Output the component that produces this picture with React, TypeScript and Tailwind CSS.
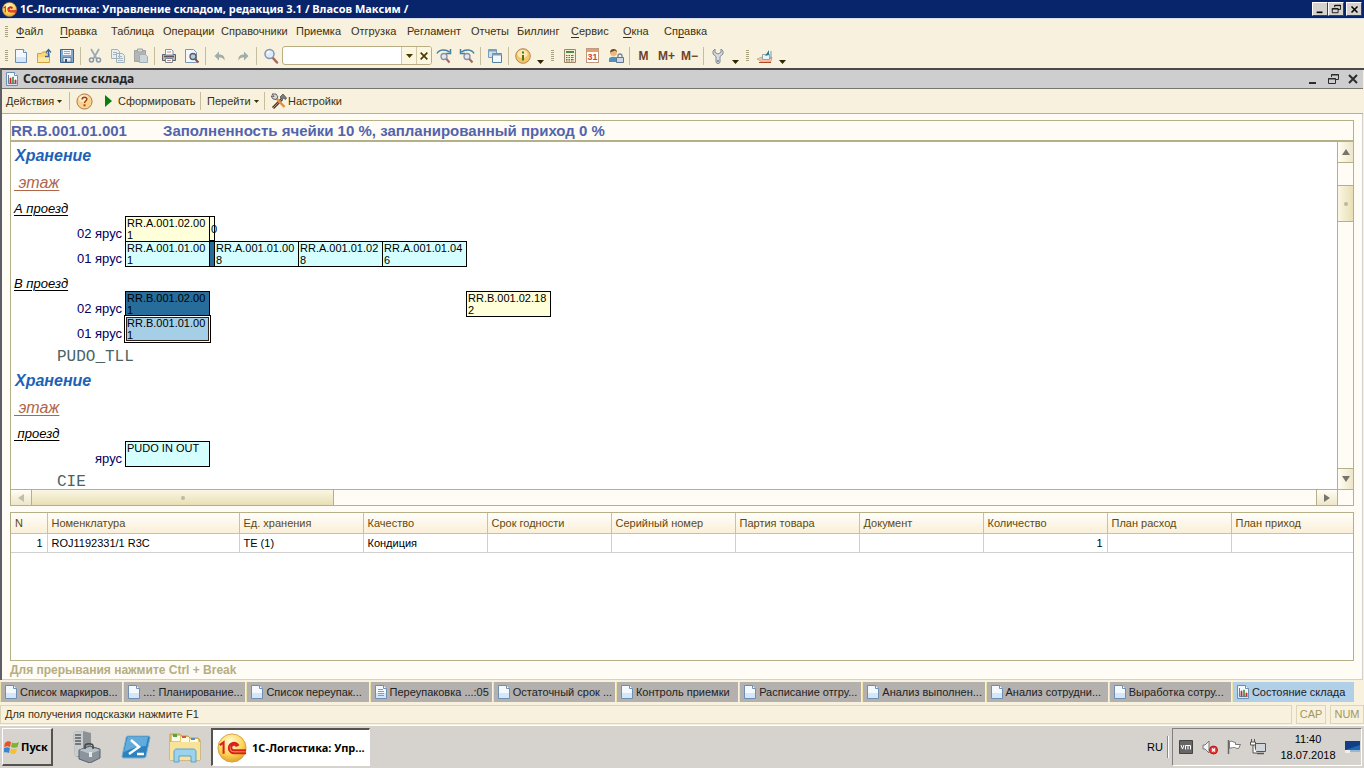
import type { ReactNode } from "react";
import clsx from "clsx";

const menuItems = [
  { before: "", key: "Ф", after: "айл", width: "w-[44px]" },
  { before: "", key: "П", after: "равка", width: "w-[51px]" },
  { before: "Таблица", key: "", after: "", width: "w-[52px]" },
  { before: "Операции", key: "", after: "", width: "w-[58px]" },
  { before: "Справочники", key: "", after: "", width: "w-[75px]" },
  { before: "Приемка", key: "", after: "", width: "w-[55px]" },
  { before: "Отгрузка", key: "", after: "", width: "w-[56px]" },
  { before: "Регламент", key: "", after: "", width: "w-[64px]" },
  { before: "Отчеты", key: "", after: "", width: "w-[46px]" },
  { before: "Биллинг", key: "", after: "", width: "w-[54px]" },
  { before: "", key: "С", after: "ервис", width: "w-[52px]" },
  { before: "", key: "О", after: "кна", width: "w-[41px]" },
  { before: "Сп", key: "р", after: "авка", width: "w-[52px]" },
];

const columns = [
  { title: "N", width: "w-9" },
  { title: "Номенклатура", width: "w-[192px]" },
  { title: "Ед. хранения", width: "w-[124px]" },
  { title: "Качество", width: "w-[124px]" },
  { title: "Срок годности", width: "w-[124px]" },
  { title: "Серийный номер", width: "w-[124px]" },
  { title: "Партия товара", width: "w-[124px]" },
  { title: "Документ", width: "w-[124px]" },
  { title: "Количество", width: "w-[124px]" },
  { title: "План расход", width: "w-[124px]" },
  { title: "План приход", width: "" },
];

const rows = [["1", "ROJ1192331/1 R3C", "ТЕ (1)", "Кондиция", "", "", "", "", "1", "", ""]];

const windows = [
  { title: "Список маркиров...", icon: "page" },
  { title: "...: Планирование...", icon: "page" },
  { title: "Список переупак...", icon: "page" },
  { title: "Переупаковка ...:05", icon: "lines" },
  { title: "Остаточный срок ...", icon: "page" },
  { title: "Контроль приемки", icon: "page" },
  { title: "Расписание отгру...", icon: "page" },
  { title: "Анализ выполнен...", icon: "page" },
  { title: "Анализ сотрудни...", icon: "page" },
  { title: "Выработка сотру...", icon: "page" },
  { title: "Состояние склада", icon: "chart", active: true },
];

function Icon({ children, className = "size-4" }: { children: ReactNode; className?: string }) {
  return (
    <svg viewBox="0 0 16 16" fill="none" className={clsx("shrink-0", className)} aria-hidden="true">
      {children}
    </svg>
  );
}

function PageIcon({ kind }: { kind: string }) {
  return (
    <Icon>
      <path d="M2.500 1.500h8l3 3v10h-11z" fill="#f4f9ff" stroke="#6d8fb3" />
      <path d="M3 9h10v5H3z" fill="#d3e6fa" />
      <path d="M10.500 1.500v3h3" fill="#fff" stroke="#6d8fb3" />
      {kind === "lines" && <path d="M5 5.500h5M5 7.500h6M5 9.500h6M5 11.500h6" stroke="#8b9aab" />}
      {kind === "chart" && (
        <>
          <path d="M4.500 4v8.500h8" stroke="#6b7c93" />
          <path d="M6 7h1v5H6zM11 9h1v3h-1z" fill="#d22" stroke="#d22" strokeWidth=".7" />
          <path d="M8.500 6h1v6h-1z" fill="#2a8a35" stroke="#2a8a35" strokeWidth=".5" />
        </>
      )}
    </Icon>
  );
}

function OneCLogo({ className }: { className?: string }) {
  return (
    <svg viewBox="0 0 32 32" className={clsx("shrink-0", className)} aria-hidden="true">
      <defs>
        <radialGradient id="gold" cx=".45" cy=".3" r=".75">
          <stop offset="0" stopColor="#fffbe0" />
          <stop offset=".55" stopColor="#ffd95c" />
          <stop offset="1" stopColor="#dd9a24" />
        </radialGradient>
      </defs>
      <circle cx="16" cy="16" r="15" fill="url(#gold)" stroke="#d3a044" />
      <path
        d="M3 13l4-3v12M23 13.500a5.500 5.500 0 1 0-4.500 8H31M21 14.500a3 3 0 1 0-2.500 4H31"
        fill="none"
        stroke="#d9201a"
        strokeWidth="2.200"
      />
    </svg>
  );
}

const magnifier = (
  <>
    <path d="M9.500 9.500l4.500 5" stroke="#a5685a" strokeWidth="2.500" strokeLinecap="round" />
    <circle cx="6.500" cy="6" r="4.500" fill="#dcebfa" stroke="#8a93ad" strokeWidth="1.500" />
    <path d="M4.500 5.500a2.500 2.500 0 0 1 2-2" stroke="#fff" strokeWidth="1.500" />
  </>
);

function ToolButton({ label, children }: { label: string; children: ReactNode }) {
  return (
    <button type="button" aria-label={label} className="flex h-6 w-[23px] shrink-0 items-center justify-center">
      {children}
    </button>
  );
}

function Separator() {
  return (
    <div className="flex w-[5px] shrink-0 justify-center">
      <div className="h-[18px] w-px bg-[#c5bd9c]" />
    </div>
  );
}

function Grip({ className }: { className?: string }) {
  return (
    <div className={clsx("flex shrink-0 flex-col items-center gap-px", className)}>
      {[0, 1, 2, 3, 4, 5].map((i) => (
        <div key={i} className="h-px w-[3px] bg-[#aaa27f]" />
      ))}
    </div>
  );
}

function MoreButton() {
  return (
    <button type="button" aria-label="Дополнительно" className="flex h-5 w-3 shrink-0 items-end justify-center pb-[2px]">
      <svg viewBox="0 0 7 4" className="h-1 w-[7px]">
        <path d="M0 0h7L3.500 4z" fill="#2f2600" />
      </svg>
    </button>
  );
}

function Caret() {
  return (
    <svg viewBox="0 0 5 3" className="h-[3px] w-[5px] shrink-0" aria-hidden="true">
      <path d="M0 0h5L2.500 3z" fill="#3b2f06" />
    </svg>
  );
}

function WindowGlyph({ kind, className }: { kind: string; className?: string }) {
  return (
    <svg viewBox="0 0 12 12" fill="none" stroke="currentColor" className={clsx("shrink-0", className)} aria-hidden="true">
      {kind === "min" && <path d="M2 10h7" strokeWidth="2" />}
      {kind === "restore" && (
        <>
          <path d="M4.500 4V1.500h7v5H8.500" />
          <path d="M4 2h8" />
          <path d="M1.500 5.500h7v5h-7zM1 6h8" />
        </>
      )}
      {kind === "close" && <path d="M2 2l8 8M10 2l-8 8" strokeWidth="2" />}
    </svg>
  );
}

function TitleBar() {
  const button =
    "flex h-[14px] w-4 items-center justify-center border border-t-white border-l-white border-r-[#404040] border-b-[#404040] bg-[#d6d3ce] text-black";
  return (
    <header className="flex h-[18px] items-center bg-[#08246b] px-[2px] text-white">
      <OneCLogo className="mr-[3px] size-[15px]" />
      <h1 className="flex-1 truncate font-['Noto_Sans',sans-serif] text-[11px] font-bold">
        1С-Логистика: Управление складом, редакция 3.1 / Власов Максим /
      </h1>
      <button type="button" aria-label="Свернуть" className={button}>
        <WindowGlyph kind="min" className="size-[10px]" />
      </button>
      <button type="button" aria-label="Восстановить" className={button}>
        <WindowGlyph kind="restore" className="size-[10px]" />
      </button>
      <button type="button" aria-label="Закрыть" className={clsx(button, "ml-[2px]")}>
        <WindowGlyph kind="close" className="size-[9px]" />
      </button>
    </header>
  );
}

function MenuBar() {
  return (
    <nav className="flex h-[25px] items-center border-t border-[#d8dce8]">
      <Grip className="mr-[7px] ml-[3px] w-[6px]" />
      {menuItems.map((item) => (
        <button key={item.before + item.key + item.after} type="button" className={clsx("shrink-0 text-left", item.width)}>
          {item.before}
          {item.key && <span className="underline underline-offset-2">{item.key}</span>}
          {item.after}
        </button>
      ))}
    </nav>
  );
}

function MainToolbar() {
  return (
    <div className="flex h-[25px] items-center">
      <Grip className="ml-[3px] w-[6px]" />
      <ToolButton label="Новый">
        <PageIcon kind="page" />
      </ToolButton>
      <ToolButton label="Открыть">
        <Icon>
          <path d="M1.500 14.500v-9h4l1-1.500h4v1.500h3v9z" fill="#f8d77a" stroke="#cfa145" />
          <path d="M2 9h11v5H2z" fill="#fbe7a4" />
          <path d="M9 8.500h3.500V2M10 4.500L12.500 1.500 15 4.500" stroke="#38689a" strokeWidth="1.300" />
        </Icon>
      </ToolButton>
      <ToolButton label="Сохранить">
        <Icon>
          <path d="M1.500 1.500h13v13h-13z" fill="#86aacd" stroke="#3e6389" />
          <path d="M4 2h8v5H4z" fill="#f2f6fa" />
          <path d="M5 3.500h6M5 5.500h6" stroke="#94a9be" />
          <path d="M4 9.500h8V14H4z" fill="#e6ecf1" stroke="#3e6389" strokeWidth=".7" />
          <path d="M6 11h2v3H6z" fill="#365575" />
        </Icon>
      </ToolButton>
      <Separator />
      <ToolButton label="Вырезать">
        <Icon>
          <path d="M4 1l5.500 9.500M12 1L6.500 10.500" stroke="#9caab5" strokeWidth="1.800" />
          <circle cx="4.500" cy="12" r="2" stroke="#8799a8" strokeWidth="1.500" />
          <circle cx="11.500" cy="12" r="2" stroke="#8799a8" strokeWidth="1.500" />
        </Icon>
      </ToolButton>
      <ToolButton label="Копировать">
        <Icon>
          <path d="M1.500 1.500h6l2 2v7h-8zM6.500 5.500h6l2 2v7h-8z" fill="#e7edf0" stroke="#a2b0ba" />
          <path d="M3 4.500h4M3 6.500h3M8 8.500h4M8 10.500h5M8 12.500h5" stroke="#a8b7c2" />
        </Icon>
      </ToolButton>
      <ToolButton label="Вставить">
        <Icon>
          <path d="M1.500 2.500h11v11h-11z" fill="#b4b6b5" stroke="#9da2a4" />
          <path d="M4.500 1h5v3h-5z" fill="#d8d9d7" stroke="#9ba1a5" />
          <path d="M6.500 6.500h6l2 2v6h-8z" fill="#ccd5da" stroke="#a0aeb7" />
        </Icon>
      </ToolButton>
      <Separator />
      <ToolButton label="Печать">
        <Icon>
          <path d="M1.500 6.500h13v6h-13z" fill="#b9b8ba" stroke="#606069" />
          <path d="M4.500 1.500h6l1.500 1.500v4h-7.500z" fill="#fff" stroke="#8590a6" />
          <path d="M6 4h4" stroke="#cc8473" />
          <path d="M3 8.500h10" stroke="#55555c" strokeWidth="1.500" />
          <path d="M4.500 10.500h7v4h-7z" fill="#fff" stroke="#7b8495" />
          <path d="M6 12.500h4" stroke="#cc8473" />
        </Icon>
      </ToolButton>
      <ToolButton label="Предварительный просмотр">
        <Icon>
          <path d="M1.500 1.500h8l3 3v10h-11z" fill="#f5f9fe" stroke="#7896b5" />
          <circle cx="9" cy="8.500" r="3" fill="#b7c8d8" stroke="#5b5b63" strokeWidth="1.300" />
          <path d="M11 11l3.500 3.500" stroke="#944b37" strokeWidth="2" />
        </Icon>
      </ToolButton>
      <Separator />
      <ToolButton label="Отменить">
        <Icon>
          <path d="M7 3.500v3c4 0 6 2 5.500 6C11 10 10 9.500 7 9.500v3L2.500 8z" fill="#9faea9" />
        </Icon>
      </ToolButton>
      <ToolButton label="Вернуть">
        <Icon>
          <path d="M9 3.500v3c-4 0-6 2-5.500 6C5 10 6 9.500 9 9.500v3L13.500 8z" fill="#9faea9" />
        </Icon>
      </ToolButton>
      <Separator />
      <ToolButton label="Найти">
        <Icon>{magnifier}</Icon>
      </ToolButton>
      <div className="flex h-[19px] w-[150px] shrink-0 overflow-hidden rounded-[3px] border border-[#b9ad82] bg-white">
        <input type="text" aria-label="Поиск" className="w-0 flex-1 px-1 outline-none" />
        <button type="button" aria-label="История поиска" className="flex w-[15px] items-center justify-center border-l border-[#d3caa5] bg-[#fbf6e0]">
          <svg viewBox="0 0 7 4" className="h-1 w-[7px]">
            <path d="M0 0h7L3.500 4z" fill="#4b3a00" />
          </svg>
        </button>
        <button type="button" aria-label="Очистить" className="flex w-[15px] items-center justify-center border-l border-[#d3caa5] bg-[#fbf6e0] text-[#4b3a00]">
          <WindowGlyph kind="close" className="size-[10px]" />
        </button>
      </div>
      <ToolButton label="Найти следующий">
        <Icon>
          <path d="M1 5.500C3 1 10 1 13.500 4M14.500 1v4.500H10" stroke="#4580a4" strokeWidth="1.500" />
          <path d="M10 10.500l3.500 4" stroke="#a5685a" strokeWidth="2" />
          <circle cx="8" cy="8.500" r="3" fill="#e2e8f0" stroke="#8a8fa5" strokeWidth="1.300" />
        </Icon>
      </ToolButton>
      <ToolButton label="Найти предыдущий">
        <Icon>
          <path d="M15 5.500C13 1 6 1 2.500 4M1.500 1v4.500H6" stroke="#4580a4" strokeWidth="1.500" />
          <path d="M10 10.500l3.500 4" stroke="#a5685a" strokeWidth="2" />
          <circle cx="8" cy="8.500" r="3" fill="#e2e8f0" stroke="#8a8fa5" strokeWidth="1.300" />
        </Icon>
      </ToolButton>
      <Separator />
      <ToolButton label="Окна">
        <Icon>
          <path d="M1.500 1.500h8v8h-8z" fill="#cfdfec" stroke="#7a9cb8" />
          <path d="M5.500 5.500h9v9h-9z" fill="#f3f8fd" stroke="#57809f" />
          <path d="M2 2.500h7M5 6.500h10" stroke="#7ba0bd" strokeWidth="2" />
        </Icon>
      </ToolButton>
      <Separator />
      <ToolButton label="Информация">
        <Icon>
          <circle cx="8" cy="8" r="7.300" fill="#f7c568" stroke="#b08852" />
          <ellipse cx="7.500" cy="6" rx="5" ry="4" fill="#fde8b0" />
          <path d="M8 7v5.500M8 3.500v2" stroke="#477721" strokeWidth="2" />
        </Icon>
      </ToolButton>
      <MoreButton />
      <Grip className="w-3" />
      <ToolButton label="Калькулятор">
        <Icon>
          <path d="M2.500 1.500h11v13h-11z" fill="#f5edd6" stroke="#9b8766" />
          <path d="M4 3h8v2H4z" fill="#498f42" />
          <path d="M4 7.500h8M4 9.500h8M4 11.500h8M4 13h8" stroke="#71664c" strokeDasharray="1.500 1" />
          <path d="M10.500 7v6" stroke="#c6523c" strokeDasharray="1 1" />
        </Icon>
      </ToolButton>
      <ToolButton label="Календарь">
        <div className="flex h-[15px] w-[13px] flex-col border border-[#be9b7e] bg-white">
          <div className="h-[3px] shrink-0 bg-[#e2a06d]" />
          <span className="text-center text-[9px] leading-[10px] font-bold text-[#d4442c]">31</span>
        </div>
      </ToolButton>
      <ToolButton label="Пользователи">
        <Icon>
          <path d="M1 14v-3c0-3 9-3 9 0v3z" fill="#4e91be" />
          <circle cx="5.500" cy="4.500" r="3.500" fill="#edb77b" />
          <path d="M2 4.500C2 0 9 0 9 4L7 2.500z" fill="#6e4a21" />
          <path d="M10 10V8a2 2 0 0 1 4 0v2" stroke="#748496" strokeWidth="1.300" />
          <path d="M8.500 9.500h7v5h-7z" fill="#ccd9e5" stroke="#60758c" />
        </Icon>
      </ToolButton>
      <Separator />
      {["M", "M+", "M−"].map((name) => (
        <button key={name} type="button" className="w-[23px] shrink-0 text-center text-xs font-bold text-[#70412b]">
          {name}
        </button>
      ))}
      <Separator />
      <ToolButton label="Параметры">
        <Icon>
          <path
            d="M5 1v3.500l3 1.500 3-1.500V1l2 2v3l-3 2.500v5.500c0 2-4 2-4 0V8.500L3 6V3z"
            fill="#d8dce0"
            stroke="#7e8893"
          />
          <circle cx="8" cy="13" r=".9" fill="#68727c" />
        </Icon>
      </ToolButton>
      <MoreButton />
      <Grip className="w-3" />
      <ToolButton label="Обработки">
        <Icon>
          <path d="M0 11l5-2 10 .5-1 4-8 1z" fill="#f0c697" stroke="#cc9b6b" strokeWidth=".7" />
          <path d="M5.500 6.500h7v5h-7z" fill="#edf3f6" stroke="#8ea5b4" />
          <path d="M8 8l4-6v5z" fill="#2d7c80" />
          <path d="M2 14.500h12" stroke="#b3432f" />
          <path d="M14 3v8" stroke="#6e9bc1" />
        </Icon>
      </ToolButton>
      <MoreButton />
    </div>
  );
}

function ReportToolbar() {
  return (
    <div className="flex h-[25px] items-center border-b border-[#b9b084] bg-[#f7f1de] pl-1">
      <button type="button" className="flex w-[61px] shrink-0 items-center gap-[3px]">
        Действия <Caret />
      </button>
      <Separator />
      <button type="button" aria-label="Справка" className="mr-1 ml-1 shrink-0">
        <svg viewBox="0 0 18 18" className="size-[17px]">
          <circle cx="9" cy="9" r="8" fill="#f9d38f" stroke="#a87443" />
          <ellipse cx="8" cy="6" rx="5" ry="4" fill="#fdebc9" />
          <path d="M6.500 7c0-3.500 5-3 5-.5 0 2-2.500 2-2.500 4" fill="none" stroke="#a0420f" strokeWidth="1.600" />
          <path d="M8 12h2v2H8z" fill="#a0420f" />
        </svg>
      </button>
      <button type="button" className="flex w-[101px] shrink-0 items-center gap-[6px] pl-2">
        <svg viewBox="0 0 7 12" className="h-3 w-[7px]">
          <path d="M0 0l7 6-7 6z" fill="#0b7d11" />
        </svg>
        Сформировать
      </button>
      <Separator />
      <button type="button" className="flex w-[59px] shrink-0 items-center gap-[3px] pl-1 whitespace-nowrap">
        Перейти <Caret />
      </button>
      <Separator />
      <button type="button" className="ml-1 flex shrink-0 items-center gap-px">
        <Icon>
          <path d="M2 15L11 6" stroke="#4e3a2b" strokeWidth="3" />
          <path d="M2 15L11 6" stroke="#b1907a" strokeWidth="1" />
          <path d="M9 4l3-3 3.500 4-1 1.500-2-1.500-1 1.500z" fill="#7d7d7d" stroke="#444" strokeWidth=".7" />
          <path d="M4.500 4.500l9 9.500" stroke="#df8f40" strokeWidth="2.500" />
          <path d="M1 1h4l2 3-2 2.500-3-.5-2-3 3 .5z" fill="#d8d8d8" stroke="#444" strokeWidth=".8" />
        </Icon>
        Настройки
      </button>
    </div>
  );
}

function Cell({ children, className }: { children?: ReactNode; className: string }) {
  return (
    <div className={clsx("-mr-px h-[26px] shrink-0 px-px text-[11px] leading-3 break-all text-black", className)}>
      {children}
    </div>
  );
}

const cream = "w-[85px] border border-black bg-[#ffffd9]";
const cyan = "w-[85px] border border-black bg-[#d5ffff]";

function Tier({ label, children }: { label: string; children: ReactNode }) {
  return (
    <div className="flex h-[25px]">
      <div className="w-[114px] shrink-0 pt-[9px] pr-[3px] text-right text-[13px] leading-[18px] text-[#000066]">{label}</div>
      {children}
    </div>
  );
}

function ZoneHeading({ first }: { first?: boolean }) {
  return (
    <>
      <div className={clsx("flex items-end pl-1", first ? "h-6" : "h-[25px]")}>
        <h2 className="text-[16px] leading-5 font-bold text-[#1d62b8] italic">Хранение</h2>
      </div>
      <div className="flex h-[25px] items-end pl-[3px]">
        <h3 className="text-[16px] leading-4 whitespace-pre text-[#b0664a] italic underline decoration-1 underline-offset-2"> этаж</h3>
      </div>
    </>
  );
}

function Aisle({ name }: { name: string }) {
  return (
    <div className="flex h-[25px] items-end pl-[3px]">
      <h4 className="text-[13px] leading-[15px] whitespace-pre text-black italic underline decoration-1 underline-offset-2">{name}</h4>
    </div>
  );
}

function Place({ name }: { name: string }) {
  return (
    <div className="flex h-[25px] items-end pl-[46px] font-['Liberation_Mono',monospace] text-[16px] leading-[18px] text-[#4a6464]">
      {name}
    </div>
  );
}

function ArrowButton({ d, label, className, light }: { d: string; label: string; className: string; light?: boolean }) {
  return (
    <button type="button" aria-label={label} className={clsx("flex shrink-0 items-center justify-center", className)}>
      <svg viewBox="0 0 8 8" className="size-2">
        <path d={d} fill={light ? "#c2bea9" : "#77756b"} />
      </svg>
    </button>
  );
}

function StorageMap() {
  return (
    <section className="shrink-0 border border-t-0 border-[#b5b088]">
      <div className="flex h-[347px]">
        <div className="min-w-0 flex-1 overflow-hidden bg-white">
          <ZoneHeading first />
          <Aisle name="А проезд" />
          <Tier label="02 ярус">
            <Cell className={cream}>RR.A.001.02.001</Cell>
            <div className="-mr-px h-[25px] w-[6px] shrink-0 border border-black bg-[#ffffd9] pl-px text-[11px] leading-6 text-black">0</div>
          </Tier>
          <Tier label="01 ярус">
            <Cell className={cyan}>RR.A.001.01.001</Cell>
            <Cell className="w-[6px] border border-black bg-[#266d9c]" />
            <Cell className={cyan}>RR.A.001.01.008</Cell>
            <Cell className={cyan}>RR.A.001.01.028</Cell>
            <Cell className={cyan}>RR.A.001.01.046</Cell>
          </Tier>
          <Aisle name="В проезд" />
          <Tier label="02 ярус">
            <Cell className="w-[85px] border border-black bg-[#266d9c]">RR.B.001.02.001</Cell>
            <div className="w-[257px] shrink-0" />
            <Cell className={cream}>RR.B.001.02.182</Cell>
          </Tier>
          <Tier label="01 ярус">
            <Cell className="w-[85px] bg-[#a5cfe7] pt-px pl-[2px] shadow-[0_0_0_1px_#000,inset_0_0_0_1px_#fff,inset_0_0_0_2px_#312018]">
              RR.B.001.01.001
            </Cell>
          </Tier>
          <Place name="PUDO_TLL" />
          <ZoneHeading />
          <Aisle name=" проезд" />
          <Tier label="ярус">
            <Cell className={cyan}>PUDO IN OUT</Cell>
          </Tier>
          <Place name="CIE" />
        </div>
        <div className="flex w-4 shrink-0 flex-col border-l border-[#b5b088] bg-[#fffcf5]">
          <ArrowButton label="Вверх" d="M4 1l4 6H0z" className="h-5 bg-linear-to-r from-[#fffdf4] to-[#eee6c8]" />
          <div className="h-[23px] border-t border-[#b5b088]" />
          <div className="flex h-[37px] items-center justify-center border-y border-[#b5b088] bg-linear-to-r from-[#faf6e4] to-[#e9dfb5]">
            <div className="size-1 rounded-full bg-[#bdb99f]" />
          </div>
          <div className="flex-1" />
          <ArrowButton label="Вниз" d="M0 1h8L4 7z" className="h-[21px] border-t border-[#b5b088] bg-linear-to-r from-[#fffdf4] to-[#eee6c8]" />
        </div>
      </div>
      <div className="flex h-4 border-t border-[#b5b088] bg-[#fffcf5]">
        <ArrowButton light label="Влево" d="M7 0v8L1 4z" className="w-[21px] border-r border-[#b5b088] bg-linear-to-b from-[#fffdf4] to-[#eee6c8]" />
        <div className="flex w-[302px] items-center justify-center border-r border-[#b5b088] bg-linear-to-b from-[#faf6e4] to-[#e9dfb5]">
          <div className="size-1 rounded-full bg-[#bdb99f]" />
        </div>
        <div className="flex-1" />
        <ArrowButton label="Вправо" d="M1 0l6 4-6 4z" className="w-[21px] border-l border-[#b5b088] bg-linear-to-b from-[#fffdf4] to-[#eee6c8]" />
        <div className="w-4 border-l border-[#b5b088]" />
      </div>
    </section>
  );
}

function StockTable() {
  return (
    <section className="mt-[6px] min-h-[148px] flex-1 border border-[#b5b088] bg-white">
      <table className="w-full table-fixed border-collapse text-left">
        <thead>
          <tr className="h-5 bg-linear-to-b from-[#fffefa] to-[#faefd8] text-[#604a10]">
            {columns.map((column) => (
              <th
                key={column.title}
                className={clsx("border-r border-b border-[#c9c2a0] px-1 font-normal whitespace-nowrap last:border-r-0", column.width)}
              >
                {column.title}
              </th>
            ))}
          </tr>
        </thead>
        <tbody>
          {rows.map((row) => (
            <tr key={row[1]} className="h-[19px] text-black">
              {row.map((value, i) => (
                <td
                  key={i}
                  className={clsx(
                    "border-r border-b border-[#d0d0d0] px-1 leading-4 whitespace-nowrap last:border-r-0",
                    (i === 0 || i === 8) && "text-right",
                  )}
                >
                  {value}
                </td>
              ))}
            </tr>
          ))}
        </tbody>
      </table>
    </section>
  );
}

function ReportWindow() {
  return (
    <main className="flex flex-1 flex-col border-t-2 border-l-2 border-t-[#494949] border-l-[#5e5e66] pr-px">
      <div className="flex h-[19px] shrink-0 items-center border-b border-[#77756e] bg-[#cecece] pr-1 pl-[2px]">
        <PageIcon kind="chart" />
        <h2 className="ml-[3px] flex-1 font-['Noto_Sans',sans-serif] text-xs font-bold text-[#262626]">Состояние склада</h2>
        <div className="flex items-center gap-2 text-[#2d2d2d]">
          {["min", "restore", "close"].map((kind) => (
            <button key={kind} type="button" aria-label={kind}>
              <WindowGlyph kind={kind} className="size-3" />
            </button>
          ))}
        </div>
      </div>
      <ReportToolbar />
      <div className="flex flex-1 flex-col border-r border-b border-[#d0d0d0] bg-[#fffcf5] pt-[6px] pr-[8px] pl-2">
        <div className="flex h-[22px] shrink-0 items-center border border-b-2 border-[#b5b088] text-[15px] leading-4 font-bold whitespace-nowrap text-[#5264ad]">
          <span className="w-[152px]">RR.B.001.01.001</span>
          <span>Заполненность ячейки 10 %, запланированный приход 0 %</span>
        </div>
        <StorageMap />
        <StockTable />
        <p className="flex h-[18px] shrink-0 items-center text-xs font-bold text-[#b5ad84]">Для прерывания нажмите Ctrl + Break</p>
      </div>
    </main>
  );
}

function WindowTabs() {
  return (
    <div className="flex h-[23px] shrink-0 items-center gap-px pr-[10px]">
      {windows.map((item) => (
        <button
          key={item.title}
          type="button"
          className={clsx(
            "flex h-5 min-w-0 flex-1 items-center gap-px border-l border-[#eee4a8] pl-[2px] text-[#222]",
            item.active ? "bg-[#b2cfe8]" : "bg-[#b3b0ae]",
          )}
        >
          <PageIcon kind={item.icon} />
          <span className="whitespace-nowrap">{item.title}</span>
        </button>
      ))}
    </div>
  );
}

function StatusBar() {
  return (
    <footer className="flex h-[22px] shrink-0 items-center gap-1 text-[#3d3110]">
      <div className="flex h-[19px] flex-1 items-center border border-[#dcd5b8] pl-1">Для получения подсказки нажмите F1</div>
      <div className="flex h-[19px] w-[30px] items-center justify-center border border-[#dcd5b8] text-[#a39661]">CAP</div>
      <div className="flex h-[19px] w-[34px] items-center justify-center border border-[#dcd5b8] text-[#a39661]">NUM</div>
    </footer>
  );
}

function Taskbar() {
  return (
    <div className="flex h-[43px] shrink-0 items-center border-t border-white bg-[#d6d3ce] pr-[2px] pl-[2px] text-black">
      <button
        type="button"
        className="flex h-[38px] w-[51px] items-center gap-px border-t border-r-2 border-b-2 border-l border-t-white border-r-[#55534f] border-b-[#55534f] border-l-white pl-px font-['Noto_Sans',sans-serif] text-[11px] font-bold"
      >
        <Icon>
          <path d="M1 4c2-2 4-2 6-1L6 8c-2-1-4-1-6 0z" fill="#e8502b" />
          <path d="M8 3.500c2 1 4 1 7-.5l-1.500 5c-2 1-4 1-6.500 0z" fill="#7ab62d" />
          <path d="M0 9c2-1 4-1 6 0l-1 5c-2-1-4-1-6 0z" fill="#3e83d0" />
          <path d="M7 9.500c2 1 4 1 6 0L12 14c-2 1.500-4 1-6 0z" fill="#f6c12e" />
        </Icon>
        Пуск
      </button>
      <button type="button" aria-label="Диспетчер сервера" className="ml-[18px] flex w-8 justify-center">
        <svg viewBox="0 0 32 32" className="size-8">
          <path d="M2 1l10-1 8 2v20l-8 4H4z" fill="#8d9296" />
          <path d="M2 1l10-1v24l-8 2z" fill="#c9cdcf" />
          <path d="M4 4h6M4 7h6M4 10h6M4 13h6" stroke="#585d61" strokeWidth="1.500" />
          <path d="M8 19l11-4 10 3v9l-10 5-11-4z" fill="#8b949d" stroke="#59626a" />
          <path d="M8 19l11 4 10-4-10-3z" fill="#b9c1c8" />
          <path d="M14 18v-3c0-3 8-3 8 0v3" fill="none" stroke="#444" strokeWidth="1.500" />
          <path d="M18 21h3v5h-3z" fill="#e5e8eb" />
        </svg>
      </button>
      <button type="button" aria-label="PowerShell" className="ml-[17px] flex w-8 justify-center">
        <svg viewBox="0 0 32 32" className="size-8">
          <path d="M8 5h20c2 0 2 1 2 2l-4 18c0 1-1 2-3 2H4c-2 0-2-1-2-2L6 7c0-1 1-2 2-2z" fill="#2c82bd" stroke="#7eb3d8" />
          <path d="M8 6h20l-2 9c-8 0-15 2-22 6L7 8z" fill="#62acdc" />
          <path d="M11 9l8 7-10 7M17 23h7" fill="none" stroke="#fff" strokeWidth="2.500" />
        </svg>
      </button>
      <button type="button" aria-label="Проводник" className="ml-[17px] flex w-8 justify-center">
        <svg viewBox="0 0 32 32" className="size-8">
          <path d="M1 5V3h10l2 2h6l2 2h8l2 2v20H1z" fill="#e8c669" stroke="#c2a04b" />
          <path d="M3 5h8v5H3zM12 6h8v5h-8zM21 8h8v5h-8z" fill="#fffbe8" />
          <path d="M4 3h4v3H4z" fill="#4ca64a" />
          <path d="M13 5h4v2h-4z" fill="#d35941" />
          <path d="M22 7h4v2h-4z" fill="#4790c9" />
          <path d="M1 11h30v18H1z" fill="#f8e39b" />
          <path d="M5 31V21c0-2 1-3 3-3h16c2 0 3 1 3 3v10h-5v-6H10v6z" fill="#9bd2ef" stroke="#5ca0cb" />
        </svg>
      </button>
      <button
        type="button"
        className="ml-[10px] flex h-[38px] w-[159px] items-center gap-[5px] border-t-2 border-r border-b border-l-2 border-t-[#55534f] border-r-white border-b-white border-l-[#55534f] bg-white pl-1 font-['Noto_Sans',sans-serif] text-[11px] font-bold whitespace-nowrap"
      >
        <OneCLogo className="size-[30px]" />
        1С-Логистика: Упр...
      </button>
      <div className="flex-1" />
      <span className="mr-1">RU</span>
      <div className="mr-[3px] h-[22px] w-[2px] border-l border-[#888] bg-white" />
      <div className="flex h-[38px] w-[190px] items-center border border-t-[#808080] border-r-white border-b-white border-l-[#808080] pl-[5px]">
        <div className="flex w-[98px] shrink-0 items-center gap-2">
          <Icon>
            <path d="M1.500 1.500h13v13h-13z" fill="#666" stroke="#444" />
            <path d="M3 6l1.500 4L6 6M7.500 10.500V6.500h2.500v4M10 6.500h2.500v4" stroke="#fff" />
          </Icon>
          <Icon>
            <path d="M1 6h2l4-4v12l-4-4H1z" fill="#f5f5f5" stroke="#777" />
            <circle cx="11.500" cy="11" r="4" fill="#e33" stroke="#b51717" />
            <path d="M10 9.500l3 3M13 9.500l-3 3" stroke="#fff" strokeWidth="1.500" />
          </Icon>
          <Icon>
            <path d="M2.500 1v14" stroke="#666" strokeWidth="1.500" />
            <path d="M3.500 2.500c3-1 4 1 6 1v2h5l-2 4c-3 0-3-1-4-1s-3 0-5 1z" fill="#fff" stroke="#777" />
          </Icon>
          <Icon>
            <path d="M5.500 4.500h10v8h-10z" fill="#d1d6db" stroke="#555" />
            <path d="M7 14.500h7" stroke="#555" strokeWidth="1.500" />
            <path d="M1.500 0v3M4.500 0v3M.500 3h5v3h-5zM3 6v8h4" fill="#fff" stroke="#555" />
          </Icon>
        </div>
        <time dateTime="2018-07-18T11:40" className="flex w-[64px] shrink-0 flex-col text-center leading-4 whitespace-nowrap">
          <span>11:40</span>
          <span>18.07.2018</span>
        </time>
        <Icon className="ml-1 size-4">
          <path d="M1 2h15v11H1z" fill="#1f66b5" />
          <path d="M1 2h15v4L1 11z" fill="#123e84" />
          <path d="M1 11h15v2H1z" fill="#9bb6cf" />
          <path d="M1 11h5v3H1z" fill="#eee" />
        </Icon>
      </div>
    </div>
  );
}

export default function App() {
  return (
    <div className="flex min-h-screen flex-col overflow-x-hidden bg-[#f7f1de] font-['Liberation_Sans',Arial,sans-serif] text-[11px] leading-4 text-[#3d3110]">
      <TitleBar />
      <MenuBar />
      <MainToolbar />
      <ReportWindow />
      <WindowTabs />
      <StatusBar />
      <Taskbar />
    </div>
  );
}
